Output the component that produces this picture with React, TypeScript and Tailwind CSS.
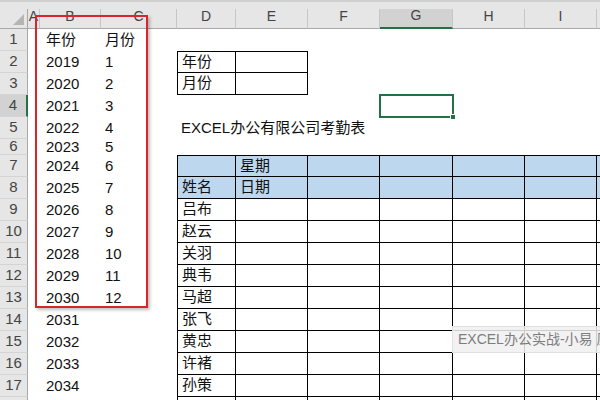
import React from "react";

const COLS = ["", "A", "B", "C", "D", "E", "F", "G", "H", "I", ""];
const ROW_H = [22, 22, 22, 22, 22, 16, 22, 22, 22, 22, 22, 22, 22, 22, 22, 22, 22, 22];
const NAMES: Record<number, string> = {
  9: "吕布",
  10: "赵云",
  11: "关羽",
  12: "典韦",
  13: "马超",
  14: "张飞",
  15: "黄忠",
  16: "许褚",
  17: "孙策",
};

function content(r: number, c: number): string {
  if (c === 2) {
    if (r === 1) return "年份";
    if (r >= 2 && r <= 17) return String(2017 + r);
  }
  if (c === 3) {
    if (r === 1) return "月份";
    if (r >= 2 && r <= 13) return String(r - 1);
  }
  if (c === 4) {
    if (r === 2) return "年份";
    if (r === 3) return "月份";
    if (r === 5) return "EXCEL办公有限公司考勤表";
    if (r === 8) return "姓名";
    if (NAMES[r]) return NAMES[r];
  }
  if (c === 5) {
    if (r === 7) return "星期";
    if (r === 8) return "日期";
  }
  return "";
}

function cellClass(r: number, c: number): string {
  const cls: string[] = ["relative flex items-center whitespace-nowrap text-[15px] text-[#111] border-black"];
  if (c === 2) cls.push("pl-[6px]");
  else cls.push("pl-[4px]");
  const inBig = r >= 7 && c >= 4;
  const inSmall = (r === 2 || r === 3) && (c === 4 || c === 5);
  if (inBig && (r === 7 || r === 8)) cls.push("bg-[#bdd7ee]");
  if (inBig || inSmall) {
    cls.push("border-b");
    if (c <= 9) cls.push("border-r");
    if (c === 4) cls.push("border-l");
    if (r === 7 || r === 2) cls.push("border-t");
  }
  return cls.join(" ");
}

export default function App() {
  return (
    <div
      className="relative w-[600px] h-[400px] overflow-hidden bg-white"
      style={{ fontFamily: '"Liberation Sans", "Noto Sans CJK SC", sans-serif' }}
    >
      <div className="h-[9px] bg-[#e6e6e6] border-t-2 border-[#d0d0d0]" />
      <div className="grid grid-cols-[28px_12px_61px_76px_59px_72px_72px_73px_72px_72px_1fr] grid-rows-[20px_22px_22px_22px_22px_22px_16px_22px_22px_22px_22px_22px_22px_22px_22px_22px_22px_22px_22px]">
        {COLS.map((l, c) =>
          c === 0 ? (
            <div key={"h" + c} className="relative bg-[#e6e6e6] border-b border-r border-[#a8a8a8]">
              <svg className="absolute right-[3px] bottom-[3px]" width="11" height="11" viewBox="0 0 11 11">
                <polygon points="11,0 11,11 0,11" fill="#b5b5b5" />
              </svg>
            </div>
          ) : (
            <div
              key={"h" + c}
              className={
                "flex items-end justify-center pb-[1px] text-[14px] text-[#444] border-r border-[#c6c6c6] " +
                (c === 7 ? "bg-[#d2d2d2] border-b-2 border-b-[#217346]" : "bg-[#e6e6e6] border-b border-b-[#a8a8a8]")
              }
            >
              {l}
            </div>
          )
        )}
        {ROW_H.map((_, i) => {
          const r = i + 1;
          return (
            <React.Fragment key={r}>
              <div
                className={
                  "flex items-center justify-center text-[15px] text-[#444] border-b border-[#d4d4d4] " +
                  (r === 4
                    ? "bg-[#d2d2d2] border-r-2 border-r-[#217346]"
                    : "bg-[#e6e6e6] border-r border-r-[#a8a8a8]")
                }
              >
                {r}
              </div>
              {COLS.slice(1).map((_, j) => {
                const c = j + 1;
                return (
                  <div key={c} className={cellClass(r, c)}>
                    {content(r, c)}
                    {r === 4 && c === 7 && (
                      <div className="absolute -inset-[1px] border-2 border-[#217346]">
                        <div className="absolute -right-[4px] -bottom-[4px] w-[6px] h-[6px] bg-[#217346] border border-white" />
                      </div>
                    )}
                  </div>
                );
              })}
            </React.Fragment>
          );
        })}
      </div>
      <div className="absolute left-[35px] top-[15px] w-[113px] h-[293px] border-[2.5px] border-[#d7262c] shadow-[2px_2px_3px_rgba(0,0,0,0.25)]" />
      <div className="absolute left-[452px] top-[326px] w-[160px] h-[27px] flex items-center pl-[5px] bg-[rgba(240,240,240,0.85)] border border-[#e0e0e0] text-[14px] text-[#7d7d7d] whitespace-nowrap">
        EXCEL办公实战-小易 原创
      </div>
    </div>
  );
}
